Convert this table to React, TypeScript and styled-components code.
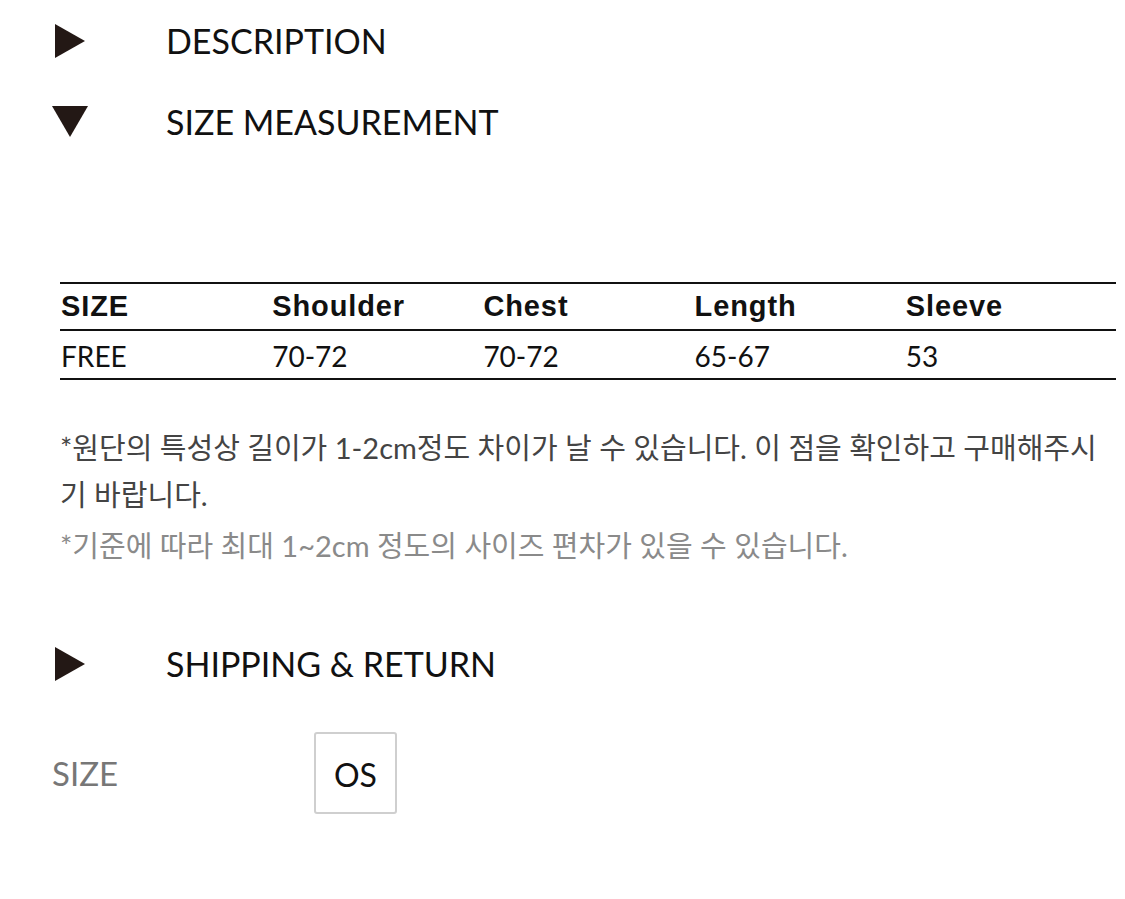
import React from "react";
import styled, { createGlobalStyle } from "styled-components";

const Global = createGlobalStyle`
  html, body { margin: 0; padding: 0; background: #fff; }
  body { font-family: Lato, "Noto Sans CJK KR", sans-serif; color: #111; }
`;

const Page = styled.div`
  width: 1125px;
  height: 899px;
  overflow: hidden;
  padding: 0 9px 0 52px;
  box-sizing: border-box;
`;

const Header = styled.div`
  display: flex;
  align-items: center;
  height: 81px;
`;

const Arrow = styled.div<{ $open?: boolean }>`
  width: 114px;
  display: flex;
  align-items: center;
  padding-left: ${(p) => (p.$open ? "0" : "3px")};
  box-sizing: border-box;
`;

const Title = styled.div`
  font-family: Lato, sans-serif;
  font-size: 34px;
  color: #111;
`;

const Content = styled.div`
  padding: 120px 0 0 8px;
`;

const Table = styled.table`
  width: 1056px;
  border-collapse: collapse;
  border-top: 2.5px solid #111;
  border-bottom: 2.5px solid #111;
`;

const Th = styled.th`
  text-align: left;
  font-family: "Liberation Sans", Arial, sans-serif;
  font-weight: bold;
  font-size: 29px;
  letter-spacing: 0.9px;
  height: 45px;
  padding: 0 0 0 1px;
  width: 20%;
  border-bottom: 2.5px solid #111;
  color: #111;
`;

const Td = styled.td`
  text-align: left;
  font-family: Lato, sans-serif;
  font-size: 28px;
  height: 45px;
  padding: 2px 0 0 1px;
  color: #111;
`;

const Notes = styled.div`
  margin-top: 44px;
  width: 1056px;
  font-family: Lato, "Noto Sans CJK KR", sans-serif;
`;

const Note = styled.p<{ $light?: boolean }>`
  margin: ${(p) => (p.$light ? "4px 0 0" : "0")};
  font-size: 29px;
  line-height: 47px;
  color: ${(p) => (p.$light ? "#8a8a8a" : "#444")};
`;

const Shipping = styled.div`
  margin-top: 54px;
`;

const SizeRow = styled.div`
  display: flex;
  align-items: center;
  margin-top: 28px;
`;

const SizeLabel = styled.div`
  width: 262px;
  font-family: Lato, sans-serif;
  font-size: 33px;
  color: #777;
`;

const SizeBox = styled.div`
  width: 83px;
  height: 82px;
  box-sizing: border-box;
  border: 2px solid #cfcfcf;
  border-radius: 3px;
  display: flex;
  align-items: center;
  justify-content: center;
  font-family: Lato, sans-serif;
  font-size: 32px;
  color: #111;
  padding-top: 3px;
`;

const RightTri = () => (
  <svg width="30" height="34" viewBox="0 0 30 34">
    <polygon points="0,0 30,17 0,34" fill="#231815" />
  </svg>
);

const DownTri = () => (
  <svg width="36" height="31" viewBox="0 0 36 31">
    <polygon points="0,0 36,0 18,31" fill="#231815" />
  </svg>
);

export default function App() {
  return (
    <Page>
      <Global />
      <Header>
        <Arrow>
          <RightTri />
        </Arrow>
        <Title>DESCRIPTION</Title>
      </Header>
      <Header>
        <Arrow $open>
          <DownTri />
        </Arrow>
        <Title>SIZE MEASUREMENT</Title>
      </Header>
      <Content>
        <Table>
          <thead>
            <tr>
              <Th>SIZE</Th>
              <Th>Shoulder</Th>
              <Th>Chest</Th>
              <Th>Length</Th>
              <Th>Sleeve</Th>
            </tr>
          </thead>
          <tbody>
            <tr>
              <Td>FREE</Td>
              <Td>70-72</Td>
              <Td>70-72</Td>
              <Td>65-67</Td>
              <Td>53</Td>
            </tr>
          </tbody>
        </Table>
        <Notes>
          <Note>
            *원단의 특성상 길이가 1-2cm정도 차이가 날 수 있습니다. 이 점을 확인하고 구매해주시기 바랍니다.
          </Note>
          <Note $light>*기준에 따라 최대 1~2cm 정도의 사이즈 편차가 있을 수 있습니다.</Note>
        </Notes>
      </Content>
      <Shipping>
        <Header>
          <Arrow>
            <RightTri />
          </Arrow>
          <Title>SHIPPING &amp; RETURN</Title>
        </Header>
      </Shipping>
      <SizeRow>
        <SizeLabel>SIZE</SizeLabel>
        <SizeBox>OS</SizeBox>
      </SizeRow>
    </Page>
  );
}
